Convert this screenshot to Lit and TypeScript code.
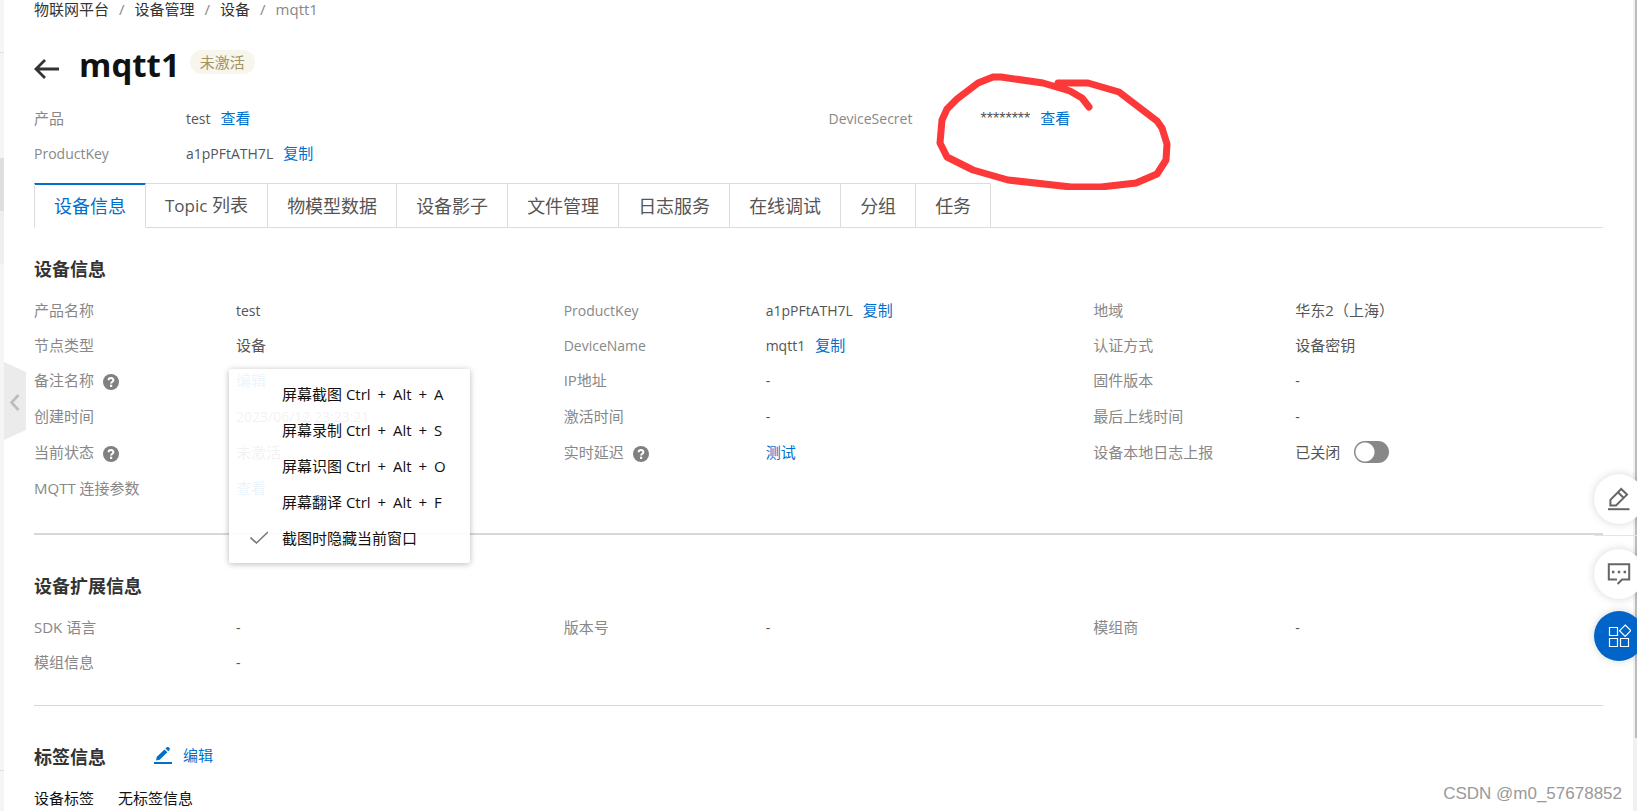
import { LitElement, html, css, svg, nothing } from "lit";
import type { TemplateResult } from "lit";
import { customElement, property } from "lit/decorators.js";
import { classMap } from "lit/directives/class-map.js";

interface Field {
  label: string;
  text?: string;
  link?: string;
  help?: boolean;
  toggle?: boolean;
}

const infoFields: Field[] = [
  { label: "产品名称", text: "test" },
  { label: "ProductKey", text: "a1pPFtATH7L", link: "复制" },
  { label: "地域", text: "华东2（上海）" },
  { label: "节点类型", text: "设备" },
  { label: "DeviceName", text: "mqtt1", link: "复制" },
  { label: "认证方式", text: "设备密钥" },
  { label: "备注名称", link: "编辑", help: true },
  { label: "IP地址", text: "-" },
  { label: "固件版本", text: "-" },
  { label: "创建时间", text: "2023/06/12 23:23:21" },
  { label: "激活时间", text: "-" },
  { label: "最后上线时间", text: "-" },
  { label: "当前状态", text: "未激活", help: true },
  { label: "实时延迟", link: "测试", help: true },
  { label: "设备本地日志上报", text: "已关闭", toggle: true },
  { label: "MQTT 连接参数", link: "查看" },
];

const extraFields: Field[] = [
  { label: "SDK 语言", text: "-" },
  { label: "版本号", text: "-" },
  { label: "模组商", text: "-" },
  { label: "模组信息", text: "-" },
];

const tabs = ["设备信息", "Topic 列表", "物模型数据", "设备影子", "文件管理", "日志服务", "在线调试", "分组", "任务"];

const menuItems: { name: string; key?: string }[] = [
  { name: "屏幕截图", key: "A" },
  { name: "屏幕录制", key: "S" },
  { name: "屏幕识图", key: "O" },
  { name: "屏幕翻译", key: "F" },
  { name: "截图时隐藏当前窗口" },
];

/* Latin-only strings are set one pixel smaller than the Chinese text. */
const latin = (s: string) => classMap({ latin: /^[\x20-\x7e]+$/.test(s) });

@customElement("field-grid")
export class FieldGrid extends LitElement {
  @property({ attribute: false }) fields: Field[] = [];

  static styles = css`
    :host { display: block; }
    .grid {
      display: grid;
      grid-template-columns: repeat(3, minmax(0, 1fr));
      column-gap: 20px;
      grid-auto-rows: 35px 35px 35px 37px 35px 37px;
      margin: 0;
    }
    .field { display: flex; align-items: center; line-height: 20px; white-space: nowrap; }
    .label { display: flex; align-items: center; flex: 0 0 202px; gap: 9px; color: #888; }
    .value { display: flex; align-items: center; gap: 10px; margin: 0; color: #555; }
    .latin { padding-top: 2px; font-size: 14px; }
    .link { color: #0070cc; text-decoration: none; }
    .switch {
      appearance: none;
      width: 35px;
      height: 22px;
      margin: 0 0 0 4px;
      border-radius: 11px;
      background: radial-gradient(circle at 11px 11px, #fff 9px, #888 10px);
    }
    .help { display: block; margin-top: 4px; }
  `;

  render() {
    return html`<dl class="grid">
      ${this.fields.map(
        (f) => html`<div class="field">
          <dt class="label">
            <span class=${latin(f.label)}>${f.label}</span>
            ${f.help
              ? html`<svg class="help" width="16" height="16" viewBox="0 0 16 16" aria-hidden="true">
                  <circle cx="8" cy="8" r="8" fill="#808080" />
                  <path d="M5.6 6.3C5.6 3.4 10.4 3.4 10.4 6.2C10.4 7.9 8.1 7.7 8.1 9.6" fill="none" stroke="#fff" stroke-width="2" />
                  <rect x="7" y="10.7" width="2.2" height="2.2" fill="#fff" />
                </svg>`
              : nothing}
          </dt>
          <dd class="value">
            ${f.text ? html`<span class=${latin(f.text)}>${f.text}</span>` : nothing}
            ${f.link ? html`<a class="link" href="#">${f.link}</a>` : nothing}
            ${f.toggle ? html`<input class="switch" type="checkbox" role="switch" aria-label=${f.label} />` : nothing}
          </dd>
        </div>`
      )}
    </dl>`;
  }
}

@customElement("app-root")
export class AppRoot extends LitElement {
  static styles = css`
    :host {
      display: flex;
      position: relative;
      min-height: 100vh;
      overflow: hidden;
      background: #fff;
      color: #333;
      font: 15px/20px "Open Sans", "Noto Sans CJK SC", sans-serif;
    }
    * { box-sizing: border-box; }
    button { font: inherit; cursor: pointer; }
    a { color: #0070cc; text-decoration: none; }
    svg { display: block; flex: none; }
    .latin { padding-top: 2px; font-size: 14px; }

    .rail { display: flex; flex-direction: column; flex: 0 0 4px; background: #f5f5f5; }
    .rail-top { height: 53px; border-bottom: 1px solid #ddd; }
    .rail-gap { height: 105px; }
    .rail-active { height: 53px; background: #dedede; }
    .rail-next { height: 53px; background: #eee; }
    .rail-rest { flex: 1; border-bottom: 1px solid #ddd; }
    .rail-foot { height: 40px; }

    .page { flex: 1; min-width: 0; padding: 0 34px 0 30px; }

    .crumbs { display: flex; height: 18px; gap: 10px; line-height: 18px; color: #888; }
    .crumbs a { color: #333; }

    .title { display: flex; align-items: center; height: 48px; margin-top: 23px; }
    .back { padding: 0; border: 0; background: none; margin: 7px 20px 0 0; }
    h1 { margin: 0; font-size: 33px; line-height: 48px; font-weight: 700; color: #111; }
    .badge { margin: 0 0 6px 10px; padding: 0 10px; border-radius: 12px; line-height: 24px; background: #f7f5ec; color: #a09364; }

    .meta { display: grid; grid-template-columns: 1fr 1fr; column-gap: 20px; grid-auto-rows: 35px; margin: 11px 0 13px; }
    .meta-item { display: flex; align-items: center; }
    .meta dt { flex: 0 0 152px; color: #888; }
    .meta dd { display: flex; align-items: center; gap: 10px; margin: 0; color: #555; }
    .mask { padding-top: 2px; font-family: "Liberation Sans", sans-serif; font-size: 16px; }
    .marked { position: relative; }
    .scribble { position: absolute; left: -49px; top: -47px; pointer-events: none; }

    .tabs { display: flex; border-bottom: 1px solid #dcdcdc; }
    .tab {
      height: 45px;
      margin-bottom: -1px;
      padding: 0 19px;
      border: 1px solid #dcdcdc;
      border-left-width: 0;
      background: #fff;
      color: #555;
      font-size: 18px;
      white-space: nowrap;
    }
    .tab.on { border-left-width: 1px; border-bottom-color: #fff; color: #0070cc; box-shadow: inset 0 1px #0070cc; border-top-color: #0070cc; }
    .tab-latin { font-size: 17px; }

    section { border-bottom: 2px solid #d8d8d8; padding: 39px 0 26px; }
    section.first { padding: 29px 0 27px; }
    section.thin { border-bottom-width: 1px; }
    section.last { border: 0; padding-bottom: 0; }
    h2 { margin: 0; font-size: 18px; line-height: 24px; font-weight: 700; color: #333; }
    field-grid { margin-top: 11px; }
    .tag-head { display: flex; align-items: center; gap: 48px; }
    .edit { display: flex; align-items: center; gap: 11px; margin-bottom: 4px; }
    .tags { display: flex; gap: 24px; margin: 19px 0 0; color: #111; }
    .tags dt, .tags dd { margin: 0; }

    .handle { position: absolute; left: 4px; top: 362px; padding: 0; border: 0; background: none; }

    .menu {
      position: absolute;
      left: 229px;
      top: 369px;
      width: 241px;
      padding: 7px 0;
      border-radius: 3px;
      background: rgba(255, 255, 255, 0.92);
      box-shadow: 0 1px 6px rgba(0, 0, 0, 0.28);
    }
    .menu-item {
      display: grid;
      grid-template-columns: 18px auto;
      column-gap: 14px;
      align-items: center;
      justify-content: start;
      width: 100%;
      height: 36px;
      padding: 0 0 0 21px;
      border: 0;
      background: none;
      color: #111;
      text-align: left;
      white-space: nowrap;
    }
    .menu-text { grid-column: 2; grid-row: 1; }
    .plus { padding: 0 3px; }

    .scroll { position: absolute; right: 0; top: 0; bottom: 0; width: 4px; background: #f1f1f1; padding-left: 2px; }
    .thumb { height: 91%; background: #bcbcbc; }

    .floats { position: absolute; right: -7px; top: 474px; display: flex; flex-direction: column; }
    .float {
      display: grid;
      place-items: center;
      width: 50px;
      height: 50px;
      padding: 0;
      border: 0;
      border-radius: 50%;
      background: #fff;
      box-shadow: 0 0 8px rgba(0, 0, 0, 0.16);
    }
    .float-line { height: 1px; margin: 11px 0 13px; background: #e4e4e4; }
    .float.blue { margin-top: 12px; background: #0064c8; }

    .watermark {
      position: absolute;
      right: 15px;
      bottom: 6px;
      color: #999;
      font: 17px/22px "Liberation Sans", sans-serif;
      text-shadow: -1px -1px #fff;
    }
  `;

  private fold(): TemplateResult {
    return html`<button class="handle" aria-label="收起">
      <svg width="22" height="78" viewBox="0 0 22 78">
        <path d="M0 0L22 10V68L0 78Z" fill="#ebebeb" />
        <path d="M14.5 33L7.5 40.5L14.5 48" fill="none" stroke="#bcbcbc" stroke-width="2.6" />
      </svg>
    </button>`;
  }

  private shortcuts(): TemplateResult {
    const tick = svg`<path d="M0.5 6.5L6.5 12L18 1" fill="none" stroke="#777" stroke-width="1.6"/>`;
    const plus = html`<span class="plus">+</span>`;
    return html`<div class="menu" role="menu">
      ${menuItems.map(
        ({ name, key }) => html`<button class="menu-item" role="menuitem">
          ${key ? nothing : html`<svg width="18" height="14" viewBox="0 0 18 14">${tick}</svg>`}
          <span class="menu-text">${name}${key ? html` Ctrl ${plus} Alt ${plus} ${key}` : nothing}</span>
        </button>`
      )}
    </div>`;
  }

  private floats(): TemplateResult {
    return html`<div class="floats">
      <button class="float" aria-label="评价">
        <svg width="24" height="24" viewBox="0 0 24 24" fill="none" stroke="#666" stroke-width="2">
          <path d="M3.4 18.4V12.8L14.2 2L20 7.6L9 18.4ZM11 5.2L16.8 11" />
          <path d="M1 22.2H22.5" />
        </svg>
      </button>
      <div class="float-line"></div>
      <button class="float" aria-label="咨询">
        <svg width="24" height="24" viewBox="0 0 24 24" fill="none" stroke="#666" stroke-width="2">
          <path d="M10 17.6H1.8V2.2H22.2V17.6H15L10.6 22" />
          <path d="M5 10H7.4M10.8 10H13.2M16.6 10H19" stroke-width="2.4" />
        </svg>
      </button>
      <button class="float blue" aria-label="应用">
        <svg width="24" height="24" viewBox="0 0 24 24" fill="none" stroke="#fff" stroke-width="1.2">
          <path d="M2.5 3.5H10.5V11.5H2.5ZM2.5 14.5H10.5V22.5H2.5ZM13.5 14.5H21.5V22.5H13.5Z" />
          <path d="M18.2 1L23.8 6.7L18.2 12.4L12.6 6.7Z" />
        </svg>
      </button>
    </div>`;
  }

  render() {
    return html`
      <div class="rail">
        <div class="rail-top"></div>
        <div class="rail-gap"></div>
        <div class="rail-active"></div>
        <div class="rail-next"></div>
        <div class="rail-rest"></div>
        <div class="rail-foot"></div>
      </div>
      <main class="page">
        <nav class="crumbs">
          <a href="#">物联网平台</a><span>/</span><a href="#">设备管理</a><span>/</span><a href="#">设备</a><span>/</span
          ><span>mqtt1</span>
        </nav>
        <header class="title">
          <button class="back" aria-label="返回">
            <svg width="25" height="20" viewBox="0 0 25 20" fill="none" stroke="#333" stroke-width="2.8">
              <path d="M25 10H2M11 1L2 10L11 19" />
            </svg>
          </button>
          <h1>mqtt1</h1>
          <span class="badge">未激活</span>
        </header>
        <dl class="meta">
          <div class="meta-item">
            <dt>产品</dt>
            <dd><span class="latin">test</span><a href="#">查看</a></dd>
          </div>
          <div class="meta-item">
            <dt class="latin">DeviceSecret</dt>
            <dd class="marked">
              <span class="mask">********</span><a href="#">查看</a>
              <svg class="scribble" width="244" height="130" viewBox="796 60 244 130" aria-hidden="true">
                <path
                  d="M953 107L946 98L934 91L907 83L865 77L857 77L842 83L821 99L811 109L806 120L804 143L811 157L837 170L872 180L935 187L965 187L1000 183L1021 174L1030 160L1031 144L1026 128L1021 121L983 92L952 83L922 83"
                  fill="none"
                  stroke="#fc3838"
                  stroke-width="7"
                  stroke-linecap="round"
                  stroke-linejoin="round"
                />
              </svg>
            </dd>
          </div>
          <div class="meta-item">
            <dt class="latin">ProductKey</dt>
            <dd><span class="latin">a1pPFtATH7L</span><a href="#">复制</a></dd>
          </div>
        </dl>
        <div class="tabs" role="tablist">
          ${tabs.map(
            (t, i) => html`<button class=${classMap({ tab: true, on: i === 0 })} role="tab" aria-selected=${i === 0}>
              ${t.startsWith("Topic") ? html`<span class="tab-latin">Topic</span>${t.slice(5)}` : t}
            </button>`
          )}
        </div>
        <section class="first">
          <h2>设备信息</h2>
          <field-grid .fields=${infoFields}></field-grid>
        </section>
        <section class="thin">
          <h2>设备扩展信息</h2>
          <field-grid .fields=${extraFields}></field-grid>
        </section>
        <section class="last">
          <div class="tag-head">
            <h2>标签信息</h2>
            <a class="edit" href="#">
              <svg width="18" height="17" viewBox="0 0 18 17" fill="#0070cc">
                <path d="M2 13.5L2.8 9.8L10.5 2.4L13.4 5.2L5.7 12.7ZM11.4 1.5L12.6 0.4C14.6-0.8 16.8 1.6 15.4 3.2L14.3 4.3Z" />
                <rect y="15" width="18" height="2" />
              </svg>
              编辑
            </a>
          </div>
          <dl class="tags"><dt>设备标签</dt><dd>无标签信息</dd></dl>
        </section>
      </main>
      ${this.fold()} ${this.shortcuts()}
      <div class="scroll"><div class="thumb"></div></div>
      ${this.floats()}
      <div class="watermark">CSDN @m0_57678852</div>
    `;
  }
}
